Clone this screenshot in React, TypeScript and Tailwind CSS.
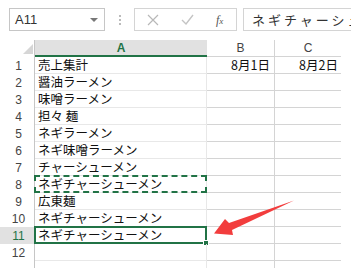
import React from 'react';

const rows: { a: string; b?: string; c?: string }[] = [
  { a: '売上集計', b: '8月1日', c: '8月2日' },
  { a: '醤油ラーメン' },
  { a: '味噌ラーメン' },
  { a: '担々 麺' },
  { a: 'ネギラーメン' },
  { a: 'ネギ味噌ラーメン' },
  { a: 'チャーシューメン' },
  { a: 'ネギチャーシューメン' },
  { a: '広東麺' },
  { a: 'ネギチャーシューメン' },
  { a: 'ネギチャーシューメン' },
  { a: '' },
  { a: '' },
];

const jp = { fontFamily: '"Noto Sans CJK JP", "Liberation Sans", sans-serif' };

const App: React.FC = () => {
  return (
    <div className="w-[351px] h-[268px] bg-white overflow-hidden relative" style={{ fontFamily: '"Liberation Sans", Arial, sans-serif' }}>
      {/* formula bar */}
      <div className="h-[40px] flex items-start pt-[8px]">
        <div className="ml-[9px] w-[96px] h-[23px] border border-[#c6c6c6] flex items-center justify-between pl-[5px] pr-[6px]">
          <span className="text-[13px] leading-none text-[#333]">A11</span>
          <span className="w-0 h-0 border-l-[4px] border-r-[4px] border-t-[4px] border-l-transparent border-r-transparent border-t-[#777]" />
        </div>
        <div className="w-[29px] h-[23px] flex flex-col items-center justify-center gap-[2px]">
          <span className="w-[2px] h-[2px] bg-[#bbb]" />
          <span className="w-[2px] h-[2px] bg-[#bbb]" />
          <span className="w-[2px] h-[2px] bg-[#bbb]" />
        </div>
        <div className="w-[103px] h-[23px] border border-[#d4d4d4] flex items-center">
          <svg width="12" height="12" viewBox="0 0 12 12" className="ml-[12px]">
            <path d="M1 1 L11 11 M11 1 L1 11" stroke="#b8b8b8" strokeWidth="1.2" fill="none" />
          </svg>
          <svg width="13" height="11" viewBox="0 0 13 11" className="ml-[22px]">
            <path d="M1 6 L5 10 L12 1" stroke="#c4c4c4" strokeWidth="1.4" fill="none" />
          </svg>
          <span className="ml-[22px] text-[12px] leading-none italic text-[#555]" style={{ fontFamily: '"Liberation Serif", serif' }}>
            f<span className="text-[9px]">x</span>
          </span>
        </div>
        <div className="ml-[6px] flex-1 h-[23px] border border-r-0 border-[#d4d4d4] flex items-center pl-[8px] overflow-hidden whitespace-nowrap">
          <span className="text-[13px] leading-none text-[#333] tracking-[3px]" style={jp}>ネギチャーシューメン</span>
        </div>
      </div>

      {/* column header */}
      <div className="h-[17px] flex text-[12px] leading-none">
        <div className="w-[35px] relative border-r border-[#c6c6c6]">
          <svg width="10" height="10" viewBox="0 0 10 10" className="absolute left-[23px] top-[4px]">
            <path d="M10 0 L10 10 L0 10 Z" fill="#d6d6d6" />
          </svg>
        </div>
        <div className="w-[172px] bg-[#e1e1e1] border-b-2 border-[#217346] flex items-center justify-center font-bold text-[#217346]">A</div>
        <div className="w-[68px] border-r border-b border-[#d4d4d4] flex items-center justify-center text-[#444]">B</div>
        <div className="w-[66px] border-b border-[#d4d4d4] flex items-center justify-center text-[#444]">C</div>
      </div>

      {/* rows */}
      {rows.map((r, i) => {
        const n = i + 1;
        const sel = n === 11;
        return (
          <div key={n} className="h-[17px] flex leading-none">
            <div
              className={`w-[35px] border-r border-[#c6c6c6] flex items-center justify-center pl-[3px] text-[12px] ${
                sel ? 'bg-[#e1e1e1] text-[#217346]' : 'text-[#444]'
              }`}
            >
              {n < 13 ? n : ''}
            </div>
            <div className="w-[172px] relative border-r border-b border-[#e8e8e8] flex items-center pl-[3px] text-[12.5px] text-[#111] whitespace-nowrap" style={jp}>
              <span className="leading-none">{r.a}</span>
              {n === 8 && <div className="absolute -left-[1px] -top-[1px] w-[173px] h-[18px] border-2 border-dashed border-[#217346]" />}
              {sel && (
                <div className="absolute -left-[1px] -top-[1px] w-[173px] h-[18px] border-2 border-[#217346]">
                  <div className="absolute -right-[4px] -bottom-[4px] w-[6px] h-[6px] bg-[#217346] border border-white" />
                </div>
              )}
            </div>
            <div className="w-[68px] border-r border-b border-[#d4d4d4] flex items-center justify-end pr-[4px] text-[12.5px] text-[#111]" style={jp}>
              <span className="leading-none">{r.b}</span>
            </div>
            <div className="w-[66px] border-b border-[#d4d4d4] flex items-center justify-end pr-[3px] text-[12.5px] text-[#111]" style={jp}>
              <span className="leading-none">{r.c}</span>
            </div>
          </div>
        );
      })}

      {/* red arrow annotation */}
      <svg className="absolute left-0 top-0 pointer-events-none" width="351" height="268" viewBox="0 0 351 268">
        <path d="M294 200.5 L229 223 L225 219 L214 233.5 L233 235 L232 230 Z" fill="#f23d3d" />
      </svg>
    </div>
  );
};

export default App;
